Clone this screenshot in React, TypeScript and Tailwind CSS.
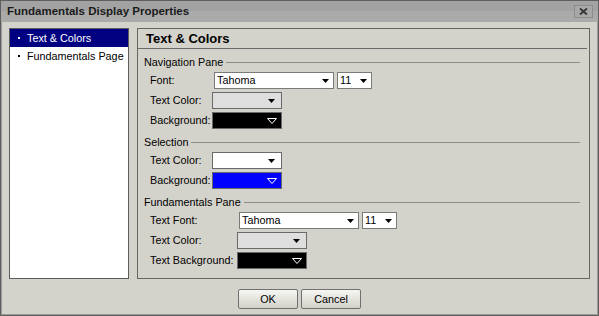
import React from "react";

const font = { fontFamily: "Tahoma, 'Liberation Sans', Arial, sans-serif" };

const Arrow = () => (
  <svg width="7" height="4" viewBox="0 0 7 4" className="shrink-0">
    <path d="M0 0H7L3.5 4Z" fill="#000" />
  </svg>
);

const HollowArrow = () => (
  <svg width="10" height="6" viewBox="0 0 10 6" className="shrink-0">
    <path d="M0.5 0.5H9.5L5 5.5Z" fill="none" stroke="#fff" strokeWidth="1" />
  </svg>
);

const Select = ({ value, width }: { value: string; width: string }) => (
  <div className={`flex h-[17px] ${width} items-center justify-between border border-[#7a7a7a] bg-white pl-[2px] pr-[4px] text-[10.8px] text-black`}>
    <span>{value}</span>
    <Arrow />
  </div>
);

const ColorBox = ({ color }: { color: "light" | "white" | "black" | "blue" }) => {
  const bg = {
    light: "bg-[#dedede]",
    white: "bg-white",
    black: "bg-black",
    blue: "bg-[#0000ff]",
  }[color];
  const dark = color === "black" || color === "blue";
  return (
    <div className={`flex h-[17px] w-[70px] items-center justify-end border border-[#6a6a6a] ${bg} ${dark ? "pr-[4px]" : "pr-[6px]"}`}>
      {dark ? <HollowArrow /> : <Arrow />}
    </div>
  );
};

const GroupLabel = ({ title }: { title: string }) => (
  <div className="mt-[6px] flex h-[14px] items-center pr-[9px] pl-[6px]">
    <span className="text-[10.8px] text-black">{title}</span>
    <div className="ml-[3px] h-px flex-1 bg-[#8c8c8c]" />
  </div>
);

const Row = ({ label, labelW, children }: { label: string; labelW: string; children: React.ReactNode }) => (
  <div className="mt-[3px] flex h-[17px] items-center pl-[12px]">
    <span className={`${labelW} shrink-0 text-[10.8px] text-black`}>{label}</span>
    {children}
  </div>
);

export default function App() {
  return (
    <div className="h-[316px] w-[599px] border border-[#5e5e5e] bg-[#d4d3cb]" style={font}>
      {/* title bar */}
      <div className="flex h-[21px] items-center justify-between bg-[linear-gradient(to_bottom,#a2a2a2_50%,#aaaaaa_50%)] pl-[6px] pr-[5px]">
        <span className="text-[11.5px] font-bold text-[#1a1a1a]">Fundamentals Display Properties</span>
        <div className="flex h-[13px] w-[19px] items-center justify-center border border-[#8c8c8c] bg-[#a8a8a8]">
          <svg width="9" height="7" viewBox="0 0 9 7">
            <path d="M1 0.5L8 6.5M8 0.5L1 6.5" stroke="#3a3a3a" strokeWidth="2" />
          </svg>
        </div>
      </div>

      <div className="flex h-[293px] flex-col border-x border-b border-[#9a9a9a] px-[7px] pt-[6px]">
        <div className="flex h-[251px] gap-[8px]">
          {/* left list */}
          <div className="w-[120px] border border-[#5c5c5c] bg-white text-[10.8px]">
            <div className="flex h-[18px] items-center bg-[#000080] pl-[8px] text-white">
              <span className="h-[2px] w-[2px] bg-white" />
              <span className="ml-[7px]">Text &amp; Colors</span>
            </div>
            <div className="flex h-[18px] items-center pl-[8px] text-black">
              <span className="h-[2px] w-[2px] bg-black" />
              <span className="ml-[7px]">Fundamentals Page</span>
            </div>
          </div>

          {/* right panel */}
          <div className="w-[453px] border border-[#666666]">
            <div className="mr-[2px] flex h-[20px] items-center border-b border-[#6a6a6a] pl-[8px]">
              <span className="text-[13px] font-bold text-black">Text &amp; Colors</span>
            </div>

            <GroupLabel title="Navigation Pane" />
            <Row label="Font:" labelW="w-[62px]">
              <div className="ml-[2px] flex gap-[3px]">
                <Select value="Tahoma" width="w-[120px]" />
                <Select value="11" width="w-[35px]" />
              </div>
            </Row>
            <Row label="Text Color:" labelW="w-[62px]">
              <ColorBox color="light" />
            </Row>
            <Row label="Background:" labelW="w-[62px]">
              <ColorBox color="black" />
            </Row>

            <GroupLabel title="Selection" />
            <Row label="Text Color:" labelW="w-[62px]">
              <ColorBox color="white" />
            </Row>
            <Row label="Background:" labelW="w-[62px]">
              <ColorBox color="blue" />
            </Row>

            <GroupLabel title="Fundamentals Pane" />
            <Row label="Text Font:" labelW="w-[87px]">
              <div className="ml-[2px] flex gap-[3px]">
                <Select value="Tahoma" width="w-[120px]" />
                <Select value="11" width="w-[35px]" />
              </div>
            </Row>
            <Row label="Text Color:" labelW="w-[87px]">
              <ColorBox color="light" />
            </Row>
            <Row label="Text Background:" labelW="w-[87px]">
              <ColorBox color="black" />
            </Row>
          </div>
        </div>

        {/* buttons */}
        <div className="mt-[10px] flex justify-center gap-[3px]">
          {["OK", "Cancel"].map((b) => (
            <button
              key={b}
              className="h-[20px] w-[60px] rounded-[2px] border border-[#707070] bg-[linear-gradient(to_bottom,#f6f6f3,#d2d1c9)] text-[10.8px] text-black"
            >
              {b}
            </button>
          ))}
        </div>
      </div>
    </div>
  );
}
